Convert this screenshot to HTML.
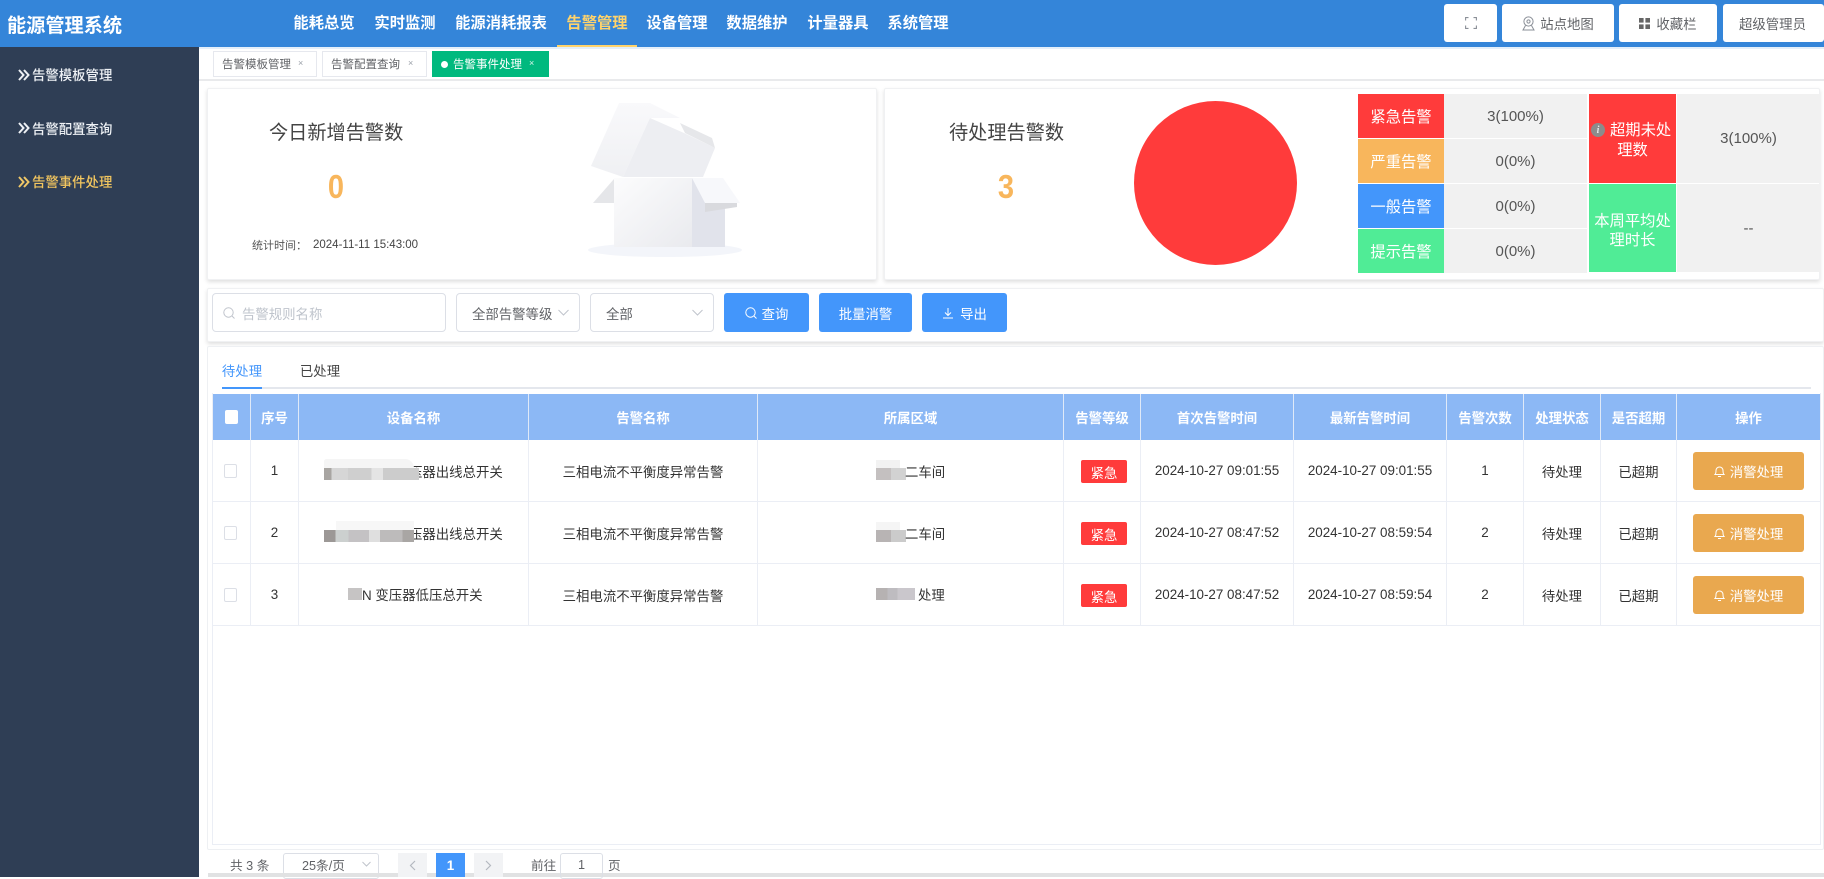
<!DOCTYPE html>
<html lang="zh"><head><meta charset="utf-8"><title>能源管理系统</title>
<style>
*{box-sizing:border-box}
html,body{margin:0;padding:0;width:1824px;height:877px;overflow:hidden;background:#fff;font-family:"Liberation Sans","Noto Sans CJK SC",sans-serif;color:#333}
.a{position:absolute}
.c{position:absolute;display:flex;align-items:center;justify-content:center;white-space:nowrap}
.l{position:absolute;display:flex;align-items:center;white-space:nowrap}
.nav{top:8px;height:28px;width:80px;font-size:15.3px;font-weight:700;color:#fff}
.side{left:32px;height:24px;font-size:13.4px;font-weight:500;color:#eef1f5}
.chev{left:18px;width:12px;height:12px}
.tab{top:51px;height:26px;border:1px solid #e6e8ee;background:#fff;font-size:11.5px;color:#606266;padding-left:8px}
.x{font-size:9px;color:#9aa0a8;position:absolute}
.hbtn{top:4px;height:38px;background:#fff;border-radius:3px;font-size:13.4px;color:#606266}
.card{background:#fff;border:1px solid #f0f1f3;box-shadow:0 2px 4px rgba(0,0,0,.13);border-radius:2px}
.lab{color:#fff;font-size:15.3px;width:86px;height:44px;left:1358px}
.val{background:#f1f1f1;color:#555;font-size:15px;width:143px;height:44px;left:1444px}
.ctl{top:293px;height:39px;border:1px solid #dcdfe6;border-radius:4px;background:#fff;font-size:13.4px}
.bt{top:293px;height:39px;background:#4396fb;border-radius:3px;color:#fff;font-size:13.4px}
.th{top:394px;height:46px;background:#8cb8f5;color:#fff;font-size:13.4px;font-weight:700;border-right:1px solid #dfe9f8}
.td{height:62px;font-size:13.4px;color:#333;border-right:1px solid #ebeef5;border-bottom:1px solid #ebeef5}
.badge{left:1081px;width:46px;height:23px;background:#ff3b3b;border-radius:2px;color:#fff;font-size:13.4px}
.op{left:1693px;width:111px;height:38px;background:#e9a84f;border-radius:3px;color:#fff;font-size:13.4px}
.cb{left:224px;width:13px;height:14px;border:1px solid #dcdfe6;border-radius:2px;background:#fff}
.m{position:absolute;height:12px}
.pg{top:853px;height:24px;width:29px;background:#f2f3f5;color:#b4b8bf;font-size:13px}
.ft{top:854px;height:20px;font-size:12.65px;color:#606266}
.t{font-size:13.4px}
</style></head><body>

<!-- header -->
<div class="a" style="left:0;top:0;width:1824px;height:47px;background:#3485d9"></div>
<div class="a" style="left:0;top:47px;width:1824px;height:2px;background:#e4effa"></div>
<div class="l" style="left:7px;top:10px;height:28px;font-size:19.2px;font-weight:700;color:#fff">能源管理系统</div>
<div class="c nav" style="left:284px">能耗总览</div>
<div class="c nav" style="left:365px">实时监测</div>
<div class="c nav" style="left:441px;width:120px">能源消耗报表</div>
<div class="c nav" style="left:557px;color:#ffd36b">告警管理</div>
<div class="a" style="left:557px;top:45px;width:80px;height:2px;background:#ffd36b"></div>
<div class="c nav" style="left:637px">设备管理</div>
<div class="c nav" style="left:717px">数据维护</div>
<div class="c nav" style="left:798px">计量器具</div>
<div class="c nav" style="left:878px">系统管理</div>

<div class="c hbtn" style="left:1444px;width:53px">
<svg width="12" height="12" viewBox="0 0 12 12" fill="none" stroke="#8a8f97" stroke-width="1.1"><path d="M.6 3.5V.6h2.9M8.5.6h2.9v2.9M11.4 8.5v2.9H8.5M3.5 11.4H.6V8.5"/></svg></div>
<div class="c hbtn" style="left:1502px;width:112px">
<svg width="13" height="15" viewBox="0 0 13 15" fill="none" stroke="#8a8f97" stroke-width="1" style="margin-right:5px"><circle cx="6.5" cy="5.5" r="4.6"/><circle cx="6.5" cy="5.5" r="1.6"/><path d="M3.5 9.5L1 14h11L9.500 9.500"/></svg>站点地图</div>
<div class="c hbtn" style="left:1619px;width:98px">
<svg width="11" height="11" viewBox="0 0 11 11" fill="#666" style="margin-right:6px"><rect width="4.600" height="4.600"/><rect x="6.400" width="4.600" height="4.600"/><rect y="6.400" width="4.600" height="4.600"/><rect x="6.400" y="6.400" width="4.600" height="4.600"/></svg>收藏栏</div>
<div class="c hbtn" style="left:1723px;width:101px;padding-right:2px">超级管理员</div>

<!-- sidebar -->
<div class="a" style="left:0;top:47px;width:199px;height:830px;background:#2f3e55"></div>
<svg class="a chev" style="top:69px" viewBox="0 0 12 12" fill="none" stroke="#eef1f5" stroke-width="2"><path d="M1 1l4.500 5L1 11M6 1l4.500 5L6 11"/></svg>
<div class="l side" style="top:62px">告警模板管理</div>
<svg class="a chev" style="top:122px" viewBox="0 0 12 12" fill="none" stroke="#eef1f5" stroke-width="2"><path d="M1 1l4.500 5L1 11M6 1l4.500 5L6 11"/></svg>
<div class="l side" style="top:116px">告警配置查询</div>
<svg class="a chev" style="top:176px" viewBox="0 0 12 12" fill="none" stroke="#f0c868" stroke-width="2"><path d="M1 1l4.500 5L1 11M6 1l4.500 5L6 11"/></svg>
<div class="l side" style="top:169px;color:#f3c65f">告警事件处理</div>

<!-- tab strip -->
<div class="a" style="left:199px;top:79px;width:1625px;height:2px;background:#e9eaec"></div>
<div class="l tab" style="left:213px;width:104px">告警模板管理<span class="x" style="left:84px;top:6px">×</span></div>
<div class="l tab" style="left:322px;width:105px">告警配置查询<span class="x" style="left:85px;top:6px">×</span></div>
<div class="l tab" style="left:432px;width:117px;background:#00b97e;border-color:#00b97e;color:#fff;padding-left:20px">
<span class="a" style="left:8px;top:9px;width:7px;height:7px;border-radius:50%;background:#fff"></span>告警事件处理<span class="x" style="left:96px;top:6px;color:#d6f5ea">×</span></div>

<!-- card 1 -->
<div class="a card" style="left:207px;top:88px;width:670px;height:192px"></div>
<div class="l" style="left:269px;top:118px;height:26px;font-size:19.2px;color:#444">今日新增告警数</div>
<div class="c" style="left:316px;top:165px;width:40px;height:44px;font-size:33px;font-weight:700;color:#f8b65c;transform:scaleX(.88)">0</div>
<div class="l" style="left:252px;top:238px;height:14px;font-size:11px;color:#555">统计时间：</div>
<div class="l" style="left:313px;top:238px;height:14px;font-size:11.5px;color:#444">2024-11-11 15:43:00</div>
<svg class="a" style="left:585px;top:95px" width="165" height="170" viewBox="585 95 165 170">
<defs>
<linearGradient id="g1" x1="0" y1="0" x2="1" y2="1"><stop offset="0" stop-color="#fcfcfd"/><stop offset="1" stop-color="#e9eaee"/></linearGradient>
<linearGradient id="g2" x1="0" y1="0" x2="0" y2="1"><stop offset="0" stop-color="#f9f9fb"/><stop offset="1" stop-color="#eff0f3"/></linearGradient>
</defs>
<ellipse cx="665" cy="250" rx="77" ry="7" fill="#f3f5fa"/>
<path d="M619 103h31l30 15h-30l-27 59-32-11z" fill="url(#g2)"/>
<path d="M650 118l34 15 31 15-12 29h-80z" fill="#edeef2"/>
<path d="M680 123l32 15 3 10-30-15z" fill="#e6e7ea"/>
<path d="M614 179l-21 24h21z" fill="#e5e6e9"/>
<rect x="614" y="178" width="78" height="69" fill="url(#g1)"/>
<path d="M692 178l33 22v47h-33z" fill="#e1e3eb"/>
<path d="M692 178h31l17 25h-35z" fill="#f7f8fb"/>
<path d="M705 203h32v4l-32 5z" fill="#d9dade"/>
</svg>

<!-- card 2 -->
<div class="a card" style="left:884px;top:88px;width:936px;height:192px"></div>
<div class="l" style="left:949px;top:118px;height:26px;font-size:19.2px;color:#444">待处理告警数</div>
<div class="c" style="left:986px;top:165px;width:40px;height:44px;font-size:33px;font-weight:700;color:#f8b65c;transform:scaleX(.88)">3</div>
<div class="a" style="left:1134px;top:101px;width:163px;height:164px;border-radius:50%;background:#ff3b3b"></div>

<div class="c lab" style="top:94px;background:#ff3b3b">紧急告警</div>
<div class="c val" style="top:94px">3(100%)</div>
<div class="c lab" style="top:139px;background:#f8b65c">严重告警</div>
<div class="c val" style="top:139px">0(0%)</div>
<div class="c lab" style="top:184px;background:#4396fb">一般告警</div>
<div class="c val" style="top:184px">0(0%)</div>
<div class="c lab" style="top:229px;background:#50ec96">提示告警</div>
<div class="c val" style="top:229px">0(0%)</div>
<div class="a" style="left:1589px;top:94px;width:87px;height:89px;background:#ff3b3b"></div>
<div class="c" style="left:1591px;top:123px;width:14px;height:14px;border-radius:50%;background:#8c8c8c;color:#e8e8e8;font-size:10px;font-style:italic;font-weight:700;font-family:'Liberation Serif',serif">i</div>
<div class="l" style="left:1610px;top:119px;height:20px;font-size:15.3px;color:#fff">超期未处</div>
<div class="c" style="left:1589px;top:139px;width:87px;height:20px;font-size:15.3px;color:#fff">理数</div>
<div class="c val" style="left:1677px;top:94px;height:89px">3(100%)</div>
<div class="a" style="left:1589px;top:184px;width:87px;height:88px;background:#50ec96"></div>
<div class="c" style="left:1589px;top:210px;width:87px;height:20px;font-size:15.3px;color:#fff">本周平均处</div>
<div class="c" style="left:1589px;top:229px;width:87px;height:20px;font-size:15.3px;color:#fff">理时长</div>
<div class="c val" style="left:1677px;top:184px;height:88px">--</div>

<!-- search -->
<div class="a card" style="left:207px;top:288px;width:1617px;height:54px"></div>
<div class="l ctl" style="left:212px;width:234px;color:#bfc4cc;padding-left:10px">
<svg width="12" height="12" viewBox="0 0 12 12" fill="none" stroke="#c0c4cc" style="margin-right:7px"><circle cx="5.500" cy="5.500" r="4.700"/><path d="M9 9l2.500 2.500"/></svg>告警规则名称</div>
<div class="l ctl" style="left:456px;width:124px;color:#606266;padding-left:15px">全部告警等级</div>
<svg class="a" style="left:558px;top:309px" width="11" height="7" viewBox="0 0 11 7" fill="none" stroke="#c0c4cc"><path d="M.5 1l5 5 5-5"/></svg>
<div class="l ctl" style="left:590px;width:124px;color:#606266;padding-left:15px">全部</div>
<svg class="a" style="left:692px;top:309px" width="11" height="7" viewBox="0 0 11 7" fill="none" stroke="#c0c4cc"><path d="M.5 1l5 5 5-5"/></svg>
<div class="c bt" style="left:724px;width:85px">
<svg width="12" height="12" viewBox="0 0 12 12" fill="none" stroke="#fff" style="margin-right:5px"><circle cx="5.500" cy="5.500" r="4.700"/><path d="M9 9l2.500 2.500"/></svg>查询</div>
<div class="c bt" style="left:819px;width:93px">批量消警</div>
<div class="c bt" style="left:922px;width:85px">
<svg width="12" height="12" viewBox="0 0 12 12" fill="none" stroke="#fff" style="margin-right:6px"><path d="M6 1v7M3 5.500L6 8.500 9 5.500M1 11h10"/></svg>导出</div>

<!-- table panel -->
<div class="a card" style="left:207px;top:346px;width:1617px;height:504px;box-shadow:none;border-color:#eef0f3"></div>
<div class="c" style="left:222px;top:360px;width:40px;height:20px;font-size:13.4px;color:#4396fb">待处理</div>
<div class="c" style="left:300px;top:360px;width:40px;height:20px;font-size:13.4px;color:#444">已处理</div>
<div class="a" style="left:222px;top:387px;width:1589px;height:2px;background:#e4e7ed"></div>
<div class="a" style="left:222px;top:387px;width:40px;height:2px;background:#4396fb"></div>
<div class="a" style="left:212px;top:393px;width:1609px;height:452px;border:1px solid #ebeef5;border-top:0"></div>

<div class="c th" style="left:213px;width:38px"><span style="width:13px;height:14px;background:#fff;border-radius:2px;display:block"></span></div>
<div class="c th" style="left:251px;width:48px">序号</div>
<div class="c th" style="left:299px;width:230px">设备名称</div>
<div class="c th" style="left:529px;width:229px">告警名称</div>
<div class="c th" style="left:758px;width:306px">所属区域</div>
<div class="c th" style="left:1064px;width:77px">告警等级</div>
<div class="c th" style="left:1141px;width:153px">首次告警时间</div>
<div class="c th" style="left:1294px;width:153px">最新告警时间</div>
<div class="c th" style="left:1447px;width:77px">告警次数</div>
<div class="c th" style="left:1524px;width:77px">处理状态</div>
<div class="c th" style="left:1601px;width:76px">是否超期</div>
<div class="c th" style="left:1677px;width:143px;border-right:0">操作</div>

<!-- row 1 -->
<div class="c td" style="left:213px;top:440px;width:38px"></div><div class="c td" style="left:251px;top:440px;width:48px">1</div>
<div class="c td" style="left:299px;top:440px;width:230px"></div><div class="c td" style="left:529px;top:440px;width:229px">三相电流不平衡度异常告警</div>
<div class="c td" style="left:758px;top:440px;width:306px"></div><div class="c td" style="left:1064px;top:440px;width:77px"></div>
<div class="c td" style="left:1141px;top:440px;width:153px">2024-10-27 09:01:55</div><div class="c td" style="left:1294px;top:440px;width:153px">2024-10-27 09:01:55</div>
<div class="c td" style="left:1447px;top:440px;width:77px">1</div><div class="c td" style="left:1524px;top:440px;width:77px">待处理</div>
<div class="c td" style="left:1601px;top:440px;width:76px">已超期</div><div class="c td" style="left:1677px;top:440px;width:143px;border-right:0"></div>
<!-- row 2 -->
<div class="c td" style="left:213px;top:502px;width:38px"></div><div class="c td" style="left:251px;top:502px;width:48px">2</div>
<div class="c td" style="left:299px;top:502px;width:230px"></div><div class="c td" style="left:529px;top:502px;width:229px">三相电流不平衡度异常告警</div>
<div class="c td" style="left:758px;top:502px;width:306px"></div><div class="c td" style="left:1064px;top:502px;width:77px"></div>
<div class="c td" style="left:1141px;top:502px;width:153px">2024-10-27 08:47:52</div><div class="c td" style="left:1294px;top:502px;width:153px">2024-10-27 08:59:54</div>
<div class="c td" style="left:1447px;top:502px;width:77px">2</div><div class="c td" style="left:1524px;top:502px;width:77px">待处理</div>
<div class="c td" style="left:1601px;top:502px;width:76px">已超期</div><div class="c td" style="left:1677px;top:502px;width:143px;border-right:0"></div>
<!-- row 3 -->
<div class="c td" style="left:213px;top:564px;width:38px"></div><div class="c td" style="left:251px;top:564px;width:48px">3</div>
<div class="c td" style="left:299px;top:564px;width:230px"></div><div class="c td" style="left:529px;top:564px;width:229px">三相电流不平衡度异常告警</div>
<div class="c td" style="left:758px;top:564px;width:306px"></div><div class="c td" style="left:1064px;top:564px;width:77px"></div>
<div class="c td" style="left:1141px;top:564px;width:153px">2024-10-27 08:47:52</div><div class="c td" style="left:1294px;top:564px;width:153px">2024-10-27 08:59:54</div>
<div class="c td" style="left:1447px;top:564px;width:77px">2</div><div class="c td" style="left:1524px;top:564px;width:77px">待处理</div>
<div class="c td" style="left:1601px;top:564px;width:76px">已超期</div><div class="c td" style="left:1677px;top:564px;width:143px;border-right:0"></div>

<div class="a cb" style="top:464px"></div><div class="a cb" style="top:526px"></div><div class="a cb" style="top:588px"></div>

<!-- device names and blurred masks -->
<div class="l t" style="left:409px;top:462px;height:18px">压器出线总开关</div>
<div class="m" style="left:324px;top:468px;width:95px;background:linear-gradient(90deg,#a8a5a2 0 8%,#d6d6d6 8% 25%,#cfcfcf 25% 50%,#e4e4e4 50% 62%,#cccccc 62% 100%)"></div>
<div class="m" style="left:324px;top:459px;width:90px;height:9px;background:#f5f5f5;border-radius:8px 30px 0 0"></div>
<div class="l t" style="left:409px;top:524px;height:18px">压器出线总开关</div>
<div class="m" style="left:324px;top:530px;width:90px;background:linear-gradient(90deg,#9c9896 0 13%,#ccd0cf 13% 27%,#c4c2c4 27% 50%,#dfdfdf 50% 62%,#bdbbbb 62% 87%,#a9a6a4 87% 100%)"></div>
<div class="m" style="left:336px;top:521px;width:78px;height:9px;background:#f7f7f7"></div>
<div class="m" style="left:348px;top:588px;width:14px;background:#c6c4c4"></div>
<div class="l t" style="left:362px;top:585px;height:18px">N 变压器低压总开关</div>

<div class="m" style="left:876px;top:468px;width:30px;background:linear-gradient(90deg,#c4c0c0 0 50%,#d2d2d2 50% 100%)"></div>
<div class="m" style="left:876px;top:460px;width:24px;height:8px;background:#f2f2f2"></div>
<div class="l t" style="left:905px;top:462px;height:18px">二车间</div>
<div class="m" style="left:876px;top:530px;width:30px;background:linear-gradient(90deg,#b8b4b4 0 50%,#cbcbcb 50% 100%)"></div>
<div class="m" style="left:876px;top:522px;width:24px;height:8px;background:#f5f5f5"></div>
<div class="l t" style="left:905px;top:524px;height:18px">二车间</div>
<div class="m" style="left:876px;top:588px;width:39px;background:linear-gradient(90deg,#b6b2b2 0 30%,#bebcc0 30% 55%,#cac7cc 55% 100%)"></div>
<div class="l t" style="left:918px;top:585px;height:18px">处理</div>

<!-- badges & ops -->
<div class="c badge" style="top:460px">紧急</div><div class="c badge" style="top:522px">紧急</div><div class="c badge" style="top:584px">紧急</div>
<div class="c op" style="top:452px"><svg width="11" height="13" viewBox="0 0 11 13" fill="none" stroke="#fff" style="margin-right:5px"><path d="M1 9.500c1-1 1-2 1-4a3.500 3.500 0 017 0c0 2 0 3 1 4zM4 11.500h3"/></svg>消警处理</div>
<div class="c op" style="top:514px"><svg width="11" height="13" viewBox="0 0 11 13" fill="none" stroke="#fff" style="margin-right:5px"><path d="M1 9.500c1-1 1-2 1-4a3.500 3.500 0 017 0c0 2 0 3 1 4zM4 11.500h3"/></svg>消警处理</div>
<div class="c op" style="top:576px"><svg width="11" height="13" viewBox="0 0 11 13" fill="none" stroke="#fff" style="margin-right:5px"><path d="M1 9.500c1-1 1-2 1-4a3.500 3.500 0 017 0c0 2 0 3 1 4zM4 11.500h3"/></svg>消警处理</div>

<!-- pagination -->
<div class="l ft" style="left:230px">共 3 条</div>
<div class="a" style="left:283px;top:853px;width:96px;height:26px;border:1px solid #dcdfe6;border-radius:3px"></div>
<div class="l ft" style="left:302px">25条/页</div>
<svg class="a" style="left:362px;top:861px" width="9" height="6" viewBox="0 0 9 6" fill="none" stroke="#c0c4cc"><path d="M.5 1l4 4 4-4"/></svg>
<div class="a" style="left:208px;top:873px;width:1616px;height:4px;background:#e1e2e3"></div>
<div class="c pg" style="left:398px"><svg width="7" height="11" viewBox="0 0 7 11" fill="none" stroke="#b4b8bf" stroke-width="1.200"><path d="M6 1L1.500 5.500 6 10"/></svg></div>
<div class="c pg" style="left:436px;background:#4396fb;color:#fff;font-weight:700;font-size:13.4px">1</div>
<div class="c pg" style="left:474px"><svg width="7" height="11" viewBox="0 0 7 11" fill="none" stroke="#b4b8bf" stroke-width="1.200"><path d="M1 1l4.500 4.500L1 10"/></svg></div>
<div class="l ft" style="left:531px">前往</div>
<div class="c" style="left:560px;top:853px;width:43px;height:26px;border:1px solid #dcdfe6;border-radius:3px;font-size:12.65px;color:#606266;padding-bottom:3px">1</div>
<div class="l ft" style="left:608px">页</div>
</body></html>
